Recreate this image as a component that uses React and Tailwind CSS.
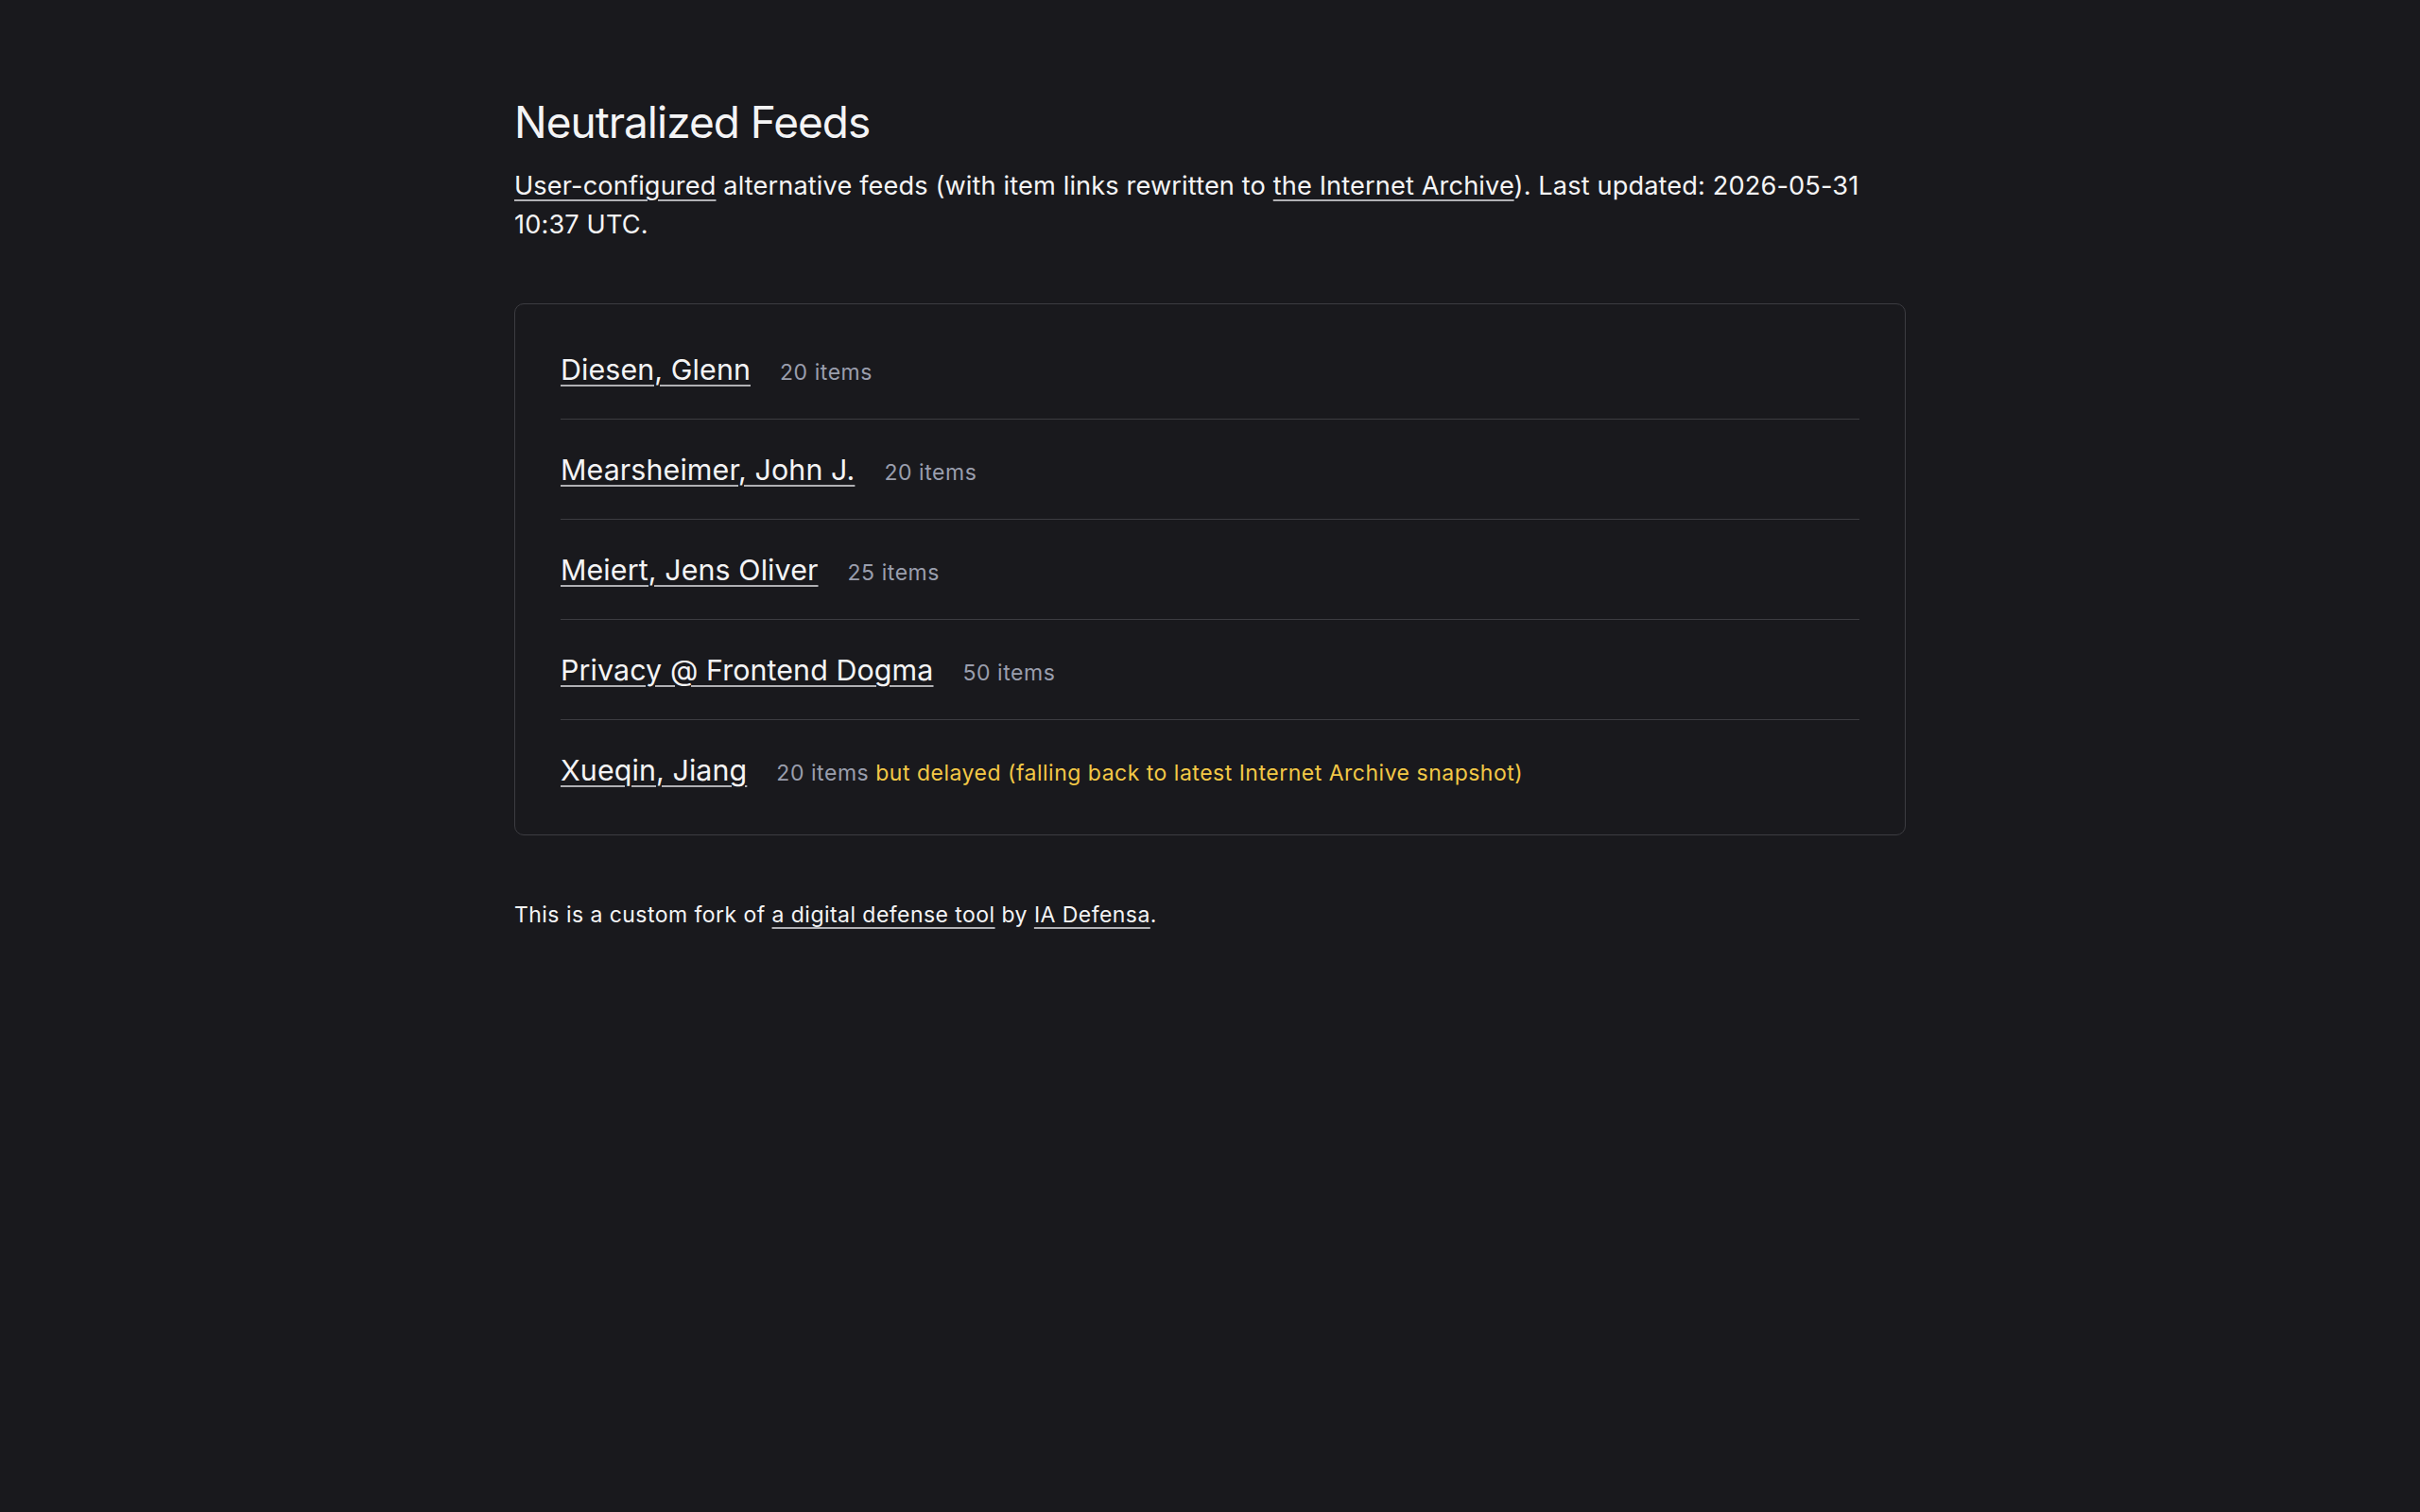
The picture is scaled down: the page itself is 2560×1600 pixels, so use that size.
import React from "react";

const feeds = [
  { name: "Diesen, Glenn", count: 20 },
  { name: "Mearsheimer, John J.", count: 20 },
  { name: "Meiert, Jens Oliver", count: 25 },
  { name: "Privacy @ Frontend Dogma", count: 50 },
  { name: "Xueqin, Jiang", count: 20, delayed: true },
];

const link =
  "underline decoration-[2px] underline-offset-[5px] decoration-[#b0b0b4] text-[#f4f4f5]";

export default function App() {
  return (
    <div
      className="min-h-[1600px] w-full bg-[#19191d] text-[#f4f4f5]"
      style={{ fontFamily: "Inter, 'Noto Sans', sans-serif" }}
    >
      <div className="mx-auto w-[1472px] pt-[102px]">
        <h1 className="text-[46px] leading-[55px] font-normal tracking-[-1px]">
          Neutralized Feeds
        </h1>
        <p className="mt-[20px] text-[27.2px] leading-[40.8px] tracking-[0.12px]">
          <a className={link}>User-configured</a> alternative feeds (with item
          links rewritten to <a className={link}>the Internet Archive</a>). Last
          updated: 2026-05-31 10:37 UTC.
        </p>

        <div className="mt-[62px] rounded-[10px] border border-[#3c3c41] px-[48px] py-[16px]">
          <ul>
            {feeds.map((f, i) => (
              <li
                key={f.name}
                className={
                  "pt-[31px] pb-[29px] text-[30.4px] leading-[45px] tracking-[0.1px] " +
                  (i < feeds.length - 1 ? "border-b border-[#3c3c41]" : "")
                }
              >
                <a className={link}>{f.name}</a>
                <span className="ml-[31px] text-[23px] leading-none tracking-[0.55px] text-[#9a9ead]">
                  {f.count} items
                </span>
                {f.delayed && (
                  <span className="text-[23px] leading-none tracking-[0.5px] text-[#f3c846]">
                    {" "}
                    but delayed (falling back to latest Internet Archive
                    snapshot)
                  </span>
                )}
              </li>
            ))}
          </ul>
        </div>

        <p className="mt-[67px] text-[23px] leading-[34.5px] tracking-[0.45px]">
          This is a custom fork of <a className={link}>a digital defense tool</a>{" "}
          by <a className={link}>IA Defensa</a>.
        </p>
      </div>
    </div>
  );
}
